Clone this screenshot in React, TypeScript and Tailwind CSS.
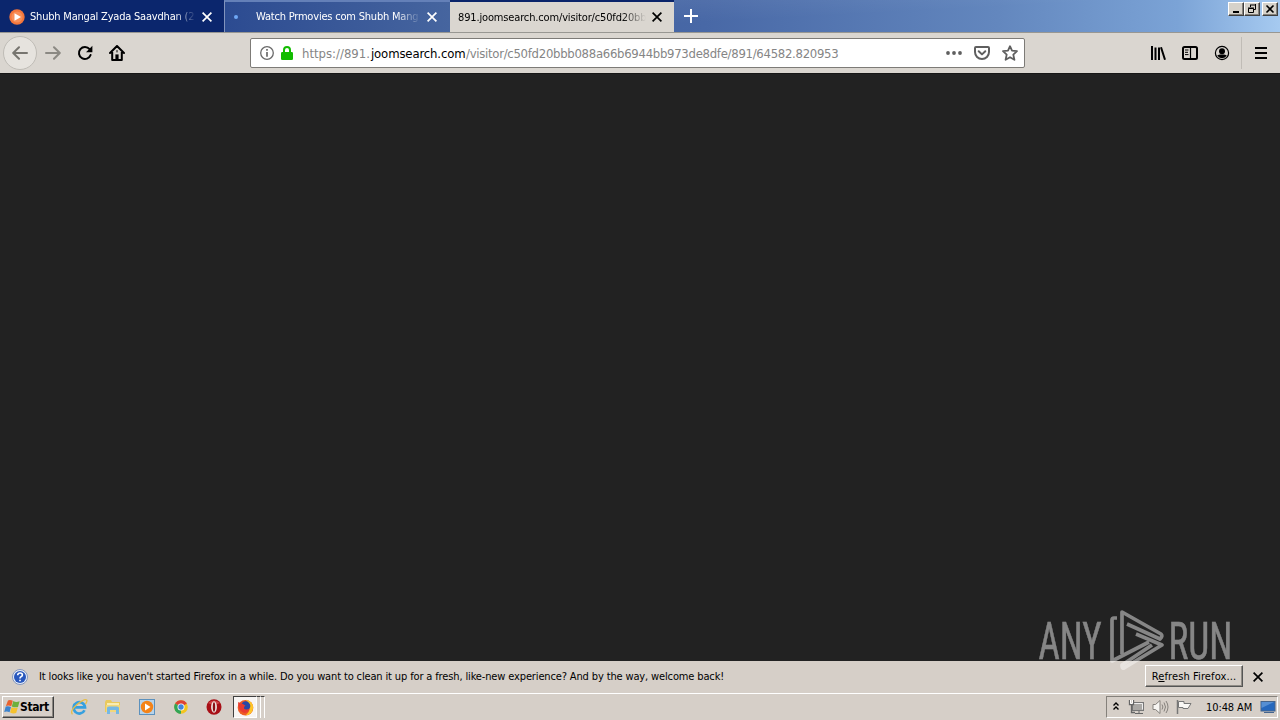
import type { ReactNode } from "react";

function CloseIcon({ className }: { className?: string }) {
  return (
    <svg width="10" height="10" viewBox="0 0 10 10" className={className}>
      <path d="M0.6 0.6L9.4 9.4M9.4 0.6L0.6 9.4" stroke="currentColor" strokeWidth="1.7" />
    </svg>
  );
}

function WindowButton({ children }: { children: ReactNode }) {
  return (
    <button className="flex h-[14px] w-4 items-center justify-center border border-t-white border-l-white border-r-[#404040] border-b-[#404040] bg-[#d6d2ca] shadow-[inset_-1px_-1px_#85817b]">
      {children}
    </button>
  );
}

function TabStrip() {
  return (
    <div className="flex h-8 shrink-0 bg-[linear-gradient(177deg,#ffffff22_0%,transparent_60%),linear-gradient(90deg,#0a246a_0%,#0c2a74_17%,#3d5c9e_35%,#4868a6_55%,#6387be_78%,#7ba3d6_92%,#a6caf0_100%)]">
      <div className="flex w-[224px] items-center bg-[#0b266d] pt-[2px] pl-[9px] text-white">
        <svg width="16" height="16" viewBox="0 0 16 16">
          <circle cx="8" cy="8" r="7.7" fill="#f4763b" />
          <circle cx="8" cy="8" r="5.6" fill="#f88e58" />
          <path d="M5.5 4.3L12 8L5.5 11.7Z" fill="#fff" />
        </svg>
        <span className="ml-[5px] w-[166px] overflow-hidden [mask-image:linear-gradient(90deg,#000_87%,transparent_100%)] tracking-[-0.2px]">
          Shubh Mangal Zyada Saavdhan (2
        </span>
        <CloseIcon className="ml-[6px]" />
      </div>
      <div className="flex w-[226px] items-center border-t-2 border-l border-t-[#6480b8] border-l-[#8294bd] bg-[linear-gradient(90deg,#2c4b91,#46659f)] pl-[9px] text-white">
        <span className="h-1 w-1 rounded-full bg-[#6fa8f5]" />
        <span className="ml-[18px] w-[165px] overflow-hidden [mask-image:linear-gradient(90deg,#000_85%,transparent_100%)] tracking-[-0.2px]">
          Watch Prmovies com Shubh Mang
        </span>
        <CloseIcon className="ml-[6px]" />
      </div>
      <div className="flex h-[33px] w-[224px] items-center border-t-2 border-[#0a246a] bg-[#dad6d0] pl-2 text-black">
        <span className="w-[188px] overflow-hidden [mask-image:linear-gradient(90deg,#000_87%,transparent_100%)] tracking-[-0.15px]">
          891.joomsearch.com/visitor/c50fd20bb
        </span>
        <CloseIcon className="mb-px ml-[6px]" />
      </div>
      <svg width="14" height="14" viewBox="0 0 14 14" className="mt-[9px] ml-[10px]">
        <path d="M7 0V14M0 7H14" stroke="#fff" strokeWidth="2" />
      </svg>
      <div className="ml-auto flex pt-[2px] pr-[2px]">
        <WindowButton>
          <svg width="14" height="12" viewBox="0 0 14 12"><path d="M4 9H10" stroke="#000" strokeWidth="2" /></svg>
        </WindowButton>
        <WindowButton>
          <svg width="12" height="12" viewBox="0 0 12 12" fill="none" stroke="#000">
            <path d="M4.5 4V2M4 2H10M9.5 1V6.5H8" />
            <path d="M2.5 5.5H7.5V9.5H2.5ZM2 5H8" />
          </svg>
        </WindowButton>
        <div className="w-[2px]" />
        <WindowButton>
          <svg width="12" height="12" viewBox="0 0 12 12"><path d="M2.5 2.5L9.5 9.5M9.5 2.5L2.5 9.5" stroke="#000" strokeWidth="1.6" /></svg>
        </WindowButton>
      </div>
    </div>
  );
}

function Toolbar() {
  return (
    <div className="flex h-[41px] shrink-0 items-center border-t border-[#989792] bg-[#dad6d0]">
      <div className="ml-[3px] flex h-[34px] w-[34px] items-center justify-center rounded-full border border-[#bfbcb6] bg-[#e6e3de] text-[#77756f]">
        <svg width="16" height="14" viewBox="0 0 16 14" fill="none" stroke="currentColor" strokeWidth="2" strokeLinecap="round" strokeLinejoin="round">
          <path d="M15 7H1.5M7 1.2L1.2 7L7 12.8" />
        </svg>
      </div>
      <svg width="16" height="14" viewBox="0 0 16 14" fill="none" stroke="#8b8983" strokeWidth="2" strokeLinecap="round" strokeLinejoin="round" className="ml-2">
        <path d="M1 7H14.5M9 1.2L14.8 7L9 12.8" />
      </svg>
      <svg width="16" height="16" viewBox="0 0 16 16" fill="none" stroke="#000" strokeWidth="2" className="ml-4">
        <path d="M13.6 10A6 6 0 1 1 12.6 4.2" strokeLinecap="round" />
        <path d="M15.4 0.8V7.2H9Z" fill="#000" stroke="none" />
      </svg>
      <svg width="16" height="16" viewBox="0 0 16 16" fill="none" stroke="#000" strokeWidth="2" strokeLinejoin="round" strokeLinecap="round" className="ml-4">
        <path d="M1 8L8 1L15 8M3.2 7.2V15H12.8V7.2" />
        <path d="M6.4 15V9.4H9.6V15Z" fill="#000" stroke="none" />
        <path d="M8 5.5V7M8 11V12.5" strokeWidth="1" stroke="#000" />
      </svg>
      <div className="ml-[125px] flex h-[30px] w-[775px] items-center rounded-[2px] border border-[#7d7b77] bg-white pr-[6px] pl-[9px]">
        <svg width="14" height="14" viewBox="0 0 14 14" fill="none" stroke="#6a6a6a">
          <circle cx="7" cy="7" r="6.3" strokeWidth="1.3" />
          <path d="M7 6V10.7M7 3V4.7" strokeWidth="1.7" />
        </svg>
        <svg width="12" height="14" viewBox="0 0 12 14" className="ml-[7px]">
          <path d="M3 7V4A3 3 0 0 1 9 4V7" fill="none" stroke="#12bc00" strokeWidth="2" />
          <rect y="6" width="12" height="8" rx="1.3" fill="#12bc00" />
        </svg>
        <div className="mt-px ml-[9px] flex text-[13px] text-[#858585]">
          <span className="w-[69px]">https://891.</span>
          <span className="w-[95px] tracking-[-0.14px] text-black">joomsearch.com</span>
          <span className="tracking-[-0.29px] whitespace-nowrap">/visitor/c50fd20bbb088a66b6944bb973de8dfe/891/64582.820953</span>
        </div>
        <div className="ml-auto flex shrink-0 items-center gap-3 text-[#5f5f5f]">
          <svg width="16" height="4" viewBox="0 0 16 4" fill="currentColor">
            <circle cx="2" cy="2" r="1.9" />
            <circle cx="8" cy="2" r="1.9" />
            <circle cx="14" cy="2" r="1.9" />
          </svg>
          <svg width="16" height="14" viewBox="0 0 16 14" fill="none" stroke="currentColor" strokeWidth="2" strokeLinejoin="round" strokeLinecap="round">
            <path d="M2 1H14Q15 1 15 2V6A7 7 0 0 1 1 6V2Q1 1 2 1Z" />
            <path d="M4.7 5.2L8 8.4L11.3 5.2" />
          </svg>
          <svg width="16" height="16" viewBox="0 0 16 16" fill="none" stroke="currentColor" strokeWidth="1.8" strokeLinejoin="round">
            <path d="M8 1.2L10 5.7L15 6.2L11.3 9.6L12.4 14.8L8 12.2L3.6 14.8L4.7 9.6L1 6.2L6 5.7Z" />
          </svg>
        </div>
      </div>
      <div className="ml-auto flex items-center gap-4 pr-[11px]">
        <svg width="16" height="14" viewBox="0 0 16 14" stroke="#000" strokeWidth="2">
          <path d="M2 0V14M5.5 1.5V14M9 1.5V14M11 1.2L15 13.7" />
        </svg>
        <svg width="16" height="14" viewBox="0 0 16 14" fill="none" stroke="#000">
          <rect x="1" y="1" width="14" height="12" rx="1.5" strokeWidth="2" />
          <path d="M8.5 1V13" strokeWidth="1.2" />
          <path d="M3 4H6.5M3 6.3H6M3 8.6H6.5" />
        </svg>
        <svg width="16" height="16" viewBox="0 0 16 16">
          <circle cx="8" cy="8" r="6.6" fill="none" stroke="#000" strokeWidth="1.2" />
          <circle cx="8" cy="6.2" r="3" />
          <path d="M3.2 10.6Q5 9.4 6.2 9.4H9.8Q11 9.4 12.8 10.6Q11.4 13.2 8 13.2T3.2 10.6Z" />
        </svg>
        <div className="-mr-[5px] -ml-[5px] h-8 w-px bg-[#c0bcb6]" />
        <svg width="16" height="12" viewBox="0 0 16 12" stroke="#000" strokeWidth="2">
          <path d="M2 1H14M2 6H14M2 11H14" />
        </svg>
      </div>
    </div>
  );
}

function Watermark() {
  return (
    <svg width="200" height="70" viewBox="1035 605 200 70" className="pointer-events-none absolute top-[605px] left-[1035px] overflow-visible opacity-45" fill="#fff">
      <text x="1038.5" y="659.3" fontFamily="Roboto" fontSize="52" stroke="#fff" strokeWidth="0.5" textLength="63" lengthAdjust="spacingAndGlyphs">ANY</text>
      <text x="1168.5" y="659.3" fontFamily="Roboto" fontSize="52" stroke="#fff" strokeWidth="0.5" textLength="64" lengthAdjust="spacingAndGlyphs">RUN</text>
      <path
        d="M1117 618H1114Q1112 618 1112 620V661L1149 642M1122 654V612L1161 634Q1163 636 1160 639L1127 624M1136 634L1162 645L1124 668Q1122 669 1122 665L1152 645"
        fill="none"
        stroke="#fff"
        strokeWidth="3.7"
        strokeLinejoin="round"
      />
    </svg>
  );
}

function RefreshBar() {
  return (
    <div className="flex h-8 shrink-0 items-center bg-[#d6cfc8] pr-[17px] pl-3 text-black">
      <svg width="16" height="16" viewBox="0 0 16 16">
        <circle cx="8" cy="8" r="7.5" fill="#e9eef8" stroke="#8396bd" />
        <circle cx="8" cy="8" r="6" fill="#2857bd" />
        <path d="M5.7 6.2Q5.8 4 8.1 4Q10.4 4 10.4 6Q10.4 7.2 9 7.8Q8 8.3 8 9.4M8 10.7V12.3" fill="none" stroke="#fff" strokeWidth="1.6" />
      </svg>
      <span className="ml-[11px] tracking-[-0.138px] whitespace-nowrap">
        It looks like you haven't started Firefox in a while. Do you want to clean it up for a fresh, like-new experience? And by the way, welcome back!
      </span>
      <button className="mr-[10px] mb-[2px] ml-auto h-[22px] w-[98px] border border-t-white border-l-white border-r-[#555] border-b-[#555] bg-[#d6cfc8] pt-px tracking-[0.1px] whitespace-nowrap shadow-[inset_-1px_-1px_#908c86]">
        R<span className="underline">e</span>fresh Firefox...
      </button>
      <CloseIcon />
    </div>
  );
}

function Taskbar() {
  return (
    <div className="flex h-[27px] shrink-0 items-center border-t border-white bg-[#d6cfc8] text-black">
      <button className="ml-[2px] flex h-[22px] w-[52px] items-center border border-t-white border-l-white border-r-[#404040] border-b-[#404040] pl-px text-[12px] font-bold tracking-[-0.4px] shadow-[inset_-1px_-1px_#8b8781]">
        <svg width="16" height="16" viewBox="0 0 16 16" className="shrink-0">
          <path d="M4 1.5Q6 0.3 8.8 1.8L7.3 7.2Q4.3 6 1.9 7Z" fill="#e8622e" />
          <path d="M9.3 2.1Q12 3.7 15.6 2.3L14 7.9Q11 9 7.8 7.5Z" fill="#6db03c" />
          <path d="M1.7 7.6Q4 6.7 7 7.9L5.6 13.2Q2.8 12 0.2 13Z" fill="#3c83cd" />
          <path d="M7.5 8.2Q10.5 9.7 13.8 8.5L12.2 14Q9.4 15.1 6.1 13.6Z" fill="#f5c22f" />
        </svg>
        <span>Start</span>
      </button>
      <svg width="18" height="18" viewBox="0 0 18 18" fill="none" className="ml-4">
        <path d="M14.5 12.2A5.7 5.7 0 1 1 15 9.3H5" stroke="#36a0df" strokeWidth="2.7" />
        <path d="M2.5 16.3Q-0.5 13 7 6.5Q15 0 16.8 2.1Q17.5 3.2 15.5 6" stroke="#e7bd46" strokeWidth="1.3" />
      </svg>
      <svg width="18" height="18" viewBox="0 0 18 18" className="ml-4">
        <path d="M1 4L2 2H7L8 4H16V14H1Z" fill="#eac95c" />
        <path d="M3 5H15V9H3Z" fill="#f9ecb0" />
        <path d="M2 7H16V14H2Z" fill="#f2d77a" />
        <path d="M3 16V10Q3 8.5 5 8.5H13Q15 8.5 15 10V16H12V12H6V16Z" fill="#75b8e4" />
      </svg>
      <svg width="18" height="18" viewBox="0 0 18 18" className="ml-4">
        <rect x="1.5" y="1.5" width="15" height="15" fill="#b7d3ea" stroke="#5c91bd" />
        <circle cx="9" cy="9" r="6.2" fill="#f48318" />
        <path d="M7 5.5L12.5 9L7 12.5Z" fill="#fff" />
      </svg>
      <svg width="16" height="16" viewBox="0 0 16 16" className="ml-[17px]">
        <circle cx="8" cy="8" r="6.8" fill="#f3c51f" />
        <path d="M8 8L2.1 4.6A6.8 6.8 0 0 1 13.9 4.6Z" fill="#dd4236" />
        <path d="M8 8L8 14.8A6.8 6.8 0 0 1 2.1 4.6Z" fill="#33a557" />
        <circle cx="8" cy="8" r="3.5" fill="#fff" />
        <circle cx="8" cy="8" r="2.7" fill="#4285dc" />
      </svg>
      <svg width="16" height="16" viewBox="0 0 16 16" className="ml-[17px]">
        <ellipse cx="8" cy="8" rx="7.5" ry="7.7" fill="#a80f16" />
        <path d="M2 4Q8 -1 14 4Q8 7 2 4Z" fill="#cf4346" />
        <ellipse cx="8" cy="8" rx="2.9" ry="5.8" fill="#eee8e4" />
        <ellipse cx="8" cy="8" rx="1.2" ry="4.8" fill="#8b1015" />
      </svg>
      <div className="ml-[11px] flex h-[22px] w-6 items-center justify-center border border-t-[#404040] border-l-[#404040] border-r-white border-b-white bg-[#f7f5f3]">
        <svg width="17" height="17" viewBox="0 0 17 17">
          <circle cx="8.5" cy="8.7" r="7.8" fill="#ef5b24" />
          <path d="M9 0.8Q16 2.5 16.2 8.5Q15.5 16 8.5 16.5Q14 12 12 7Q11 3 9 0.8Z" fill="#ffc526" />
          <circle cx="8.6" cy="7" r="4.7" fill="#2948a5" />
          <path d="M1 3Q3.2 5 5.5 4.8L8.5 6.8Q6.5 7.5 7 9.5Q8.5 11.5 12.8 9.8Q11 14.5 6.5 13.8Q1 12 1 3Z" fill="#e83b30" />
        </svg>
      </div>
      <div className="h-[22px] w-1 border-t border-r border-t-[#404040] border-r-white" />
      <div className="h-[22px] w-1 border-t border-r border-t-[#404040] border-r-white" />
      <div className="mr-[2px] ml-auto flex h-[22px] w-[172px] items-center border border-t-[#85817b] border-l-[#85817b] border-r-white border-b-white pl-[5px]">
        <svg width="8" height="12" viewBox="0 0 8 12" fill="none" stroke="#000" strokeWidth="1.4">
          <path d="M1.5 4.5L4 2L6.5 4.5M1.5 8.5L4 6L6.5 8.5" />
        </svg>
        <svg width="17" height="16" viewBox="0 0 17 16" className="ml-[8px]" fill="none">
          <rect x="4.5" y="3.5" width="11" height="8" fill="#aaa8a5" stroke="#777" />
          <path d="M5.5 4.5H14.5V10.5" stroke="#eee" />
          <path d="M7 14.5H15M11 12V14" stroke="#666" />
          <path d="M1.5 1V5.5H5.5V1M3.5 5.5V13.5H7" stroke="#666" strokeWidth="1.3" />
          <path d="M2.5 1V4.5H4.5V1" stroke="#fff" />
        </svg>
        <svg width="17" height="16" viewBox="0 0 17 16" className="ml-[7px]" fill="none" stroke="#85817c">
          <path d="M1 5.5H3.5L8 1.5V14.5L3.5 10.5H1Z" fill="#f7f5f2" />
          <path d="M10 5.5Q11.8 8 10 10.5M12 3.5Q15 8 12 12.5M14 2Q18 8 14 14" />
        </svg>
        <svg width="16" height="16" viewBox="0 0 16 16" className="ml-[7px]">
          <path d="M1.5 1V15" stroke="#777" strokeWidth="1.5" />
          <path d="M2.5 2.5H8V4.5H15L12 9.5H7V8.5H2.5Z" fill="#f9f7f4" stroke="#777" />
        </svg>
        <span className="mt-px ml-[14px] w-[48px] tracking-[-0.1px] whitespace-nowrap">10:48 AM</span>
        <svg width="16" height="14" viewBox="0 0 16 14" className="ml-[6px]">
          <rect x="1" y="1.5" width="14" height="9.5" fill="#2668bd" stroke="#46648a" />
          <path d="M1.5 2H14L1.5 8Z" fill="#568fd3" />
          <path d="M4 12.5H14" stroke="#45658f" />
        </svg>
      </div>
    </div>
  );
}

export default function App() {
  return (
    <div className="relative flex h-[720px] w-[1280px] flex-col overflow-hidden bg-[#222] font-['DejaVu_Sans_Condensed','DejaVu_Sans',sans-serif] text-[11px] leading-4 whitespace-nowrap [font-stretch:condensed]">
      <TabStrip />
      <Toolbar />
      <main className="flex-1 border-t border-[#171717] bg-[#222]" />
      <RefreshBar />
      <Taskbar />
      <Watermark />
    </div>
  );
}
